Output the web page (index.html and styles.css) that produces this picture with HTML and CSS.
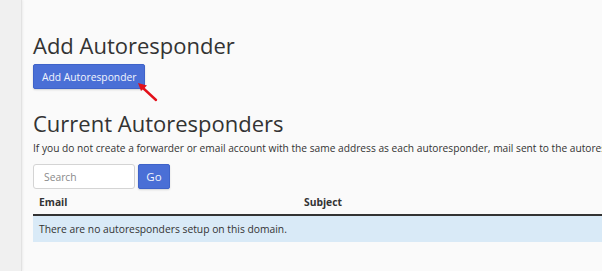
FILE: index.html
```html
<html>
<head>
<meta charset="utf-8">
<title>Autoresponders</title>
<link rel="stylesheet" href="styles.css">
</head>
<body>
	<div class="page">
		<div class="sidebar"></div>
		<div class="content">
			<h2 class="first">Add Autoresponder</h2>
			<div class="add-wrap">
				<button class="btn" id="add-btn">Add Autoresponder</button>
				<svg class="arrow" width="22" height="22" viewBox="0 0 22 22">
					<path d="M19 19 L6 7" stroke="#e3101a" stroke-width="2.4" stroke-linecap="round"/>
					<path d="M1 2 L10 4.5 L4 10 Z" fill="#e3101a"/>
				</svg>
			</div>

			<h2>Current Autoresponders</h2>
			<p class="note">If you do not create a forwarder or email account with the same address as each autoresponder, mail sent to the autoresponder will not be delivered.</p>

			<div class="search-row">
				<input type="text" class="search" placeholder="Search">
				<button class="btn go">Go</button>
			</div>

			<table class="list">
				<thead>
					<tr>
						<th class="col-email">Email</th>
						<th>Subject</th>
					</tr>
				</thead>
				<tbody>
					<tr class="empty">
						<td colspan="2">There are no autoresponders setup on this domain.</td>
					</tr>
				</tbody>
			</table>
		</div>
	</div>
</body>
</html>
```

FILE: styles.css
```css
* {
	margin: 0;
	padding: 0;
	box-sizing: border-box;
}

body {
	font-family: "Open Sans", "Liberation Sans", sans-serif;
	color: #333;
	background-color: #fafafa;
	overflow: hidden;
	width: 602px;
	height: 271px;
}

.page {
	display: flex;
	height: 271px;
}

.sidebar {
	width: 22px;
	flex: none;
	background-color: #f0f0f0;
	border-right: 1px solid #e2e2e2;
	box-shadow: 1px 0 2px rgba(0, 0, 0, 0.06);
}

.content {
	flex: 1;
	padding-left: 11px;
	padding-top: 31px;
	min-width: 0;
}

h2 {
	font-size: 22px;
	font-weight: 400;
	line-height: 28px;
	white-space: nowrap;
	margin-top: 20px;
}

h2.first {
	margin-top: 0;
}

.add-wrap {
	position: relative;
	display: inline-block;
	margin-top: 5px;
}

.btn {
	font-family: "Open Sans", "Liberation Sans", sans-serif;
	background-color: #4a6fd6;
	color: #f2f5fd;
	border: 1px solid #3f63c9;
	border-radius: 2px;
	font-size: 10.3px;
	height: 25px;
	padding: 0 8px;
	box-shadow: 0 1px 2px rgba(0, 0, 0, 0.15);
}

.arrow {
	position: absolute;
	left: 104px;
	top: 17px;
}

.note {
	font-size: 10.2px;
	line-height: 16px;
	white-space: nowrap;
	margin-top: 3px;
}

.search-row {
	display: flex;
	gap: 3px;
	margin-top: 8px;
}

.search {
	width: 102px;
	height: 25px;
	border: 1px solid #d4d4d4;
	border-radius: 3px;
	background: #fff;
	padding-left: 10px;
	font-family: "Open Sans", "Liberation Sans", sans-serif;
	font-size: 10.3px;
}

.search::placeholder {
	color: #8a8a8a;
}

.go {
	width: 32px;
	padding: 0;
	font-size: 11.5px;
}

.list {
	border-collapse: collapse;
	width: 600px;
	margin-top: 1px;
	font-size: 10.3px;
}

.list th {
	text-align: left;
	font-weight: 700;
	padding: 4px 6px 5px 6px;
	border-bottom: 2px solid #333;
	height: 25px;
}

.list th.col-email {
	width: 265px;
}

.list td {
	padding: 5px 6px;
	height: 27px;
	background-color: #d9eaf7;
}
```
